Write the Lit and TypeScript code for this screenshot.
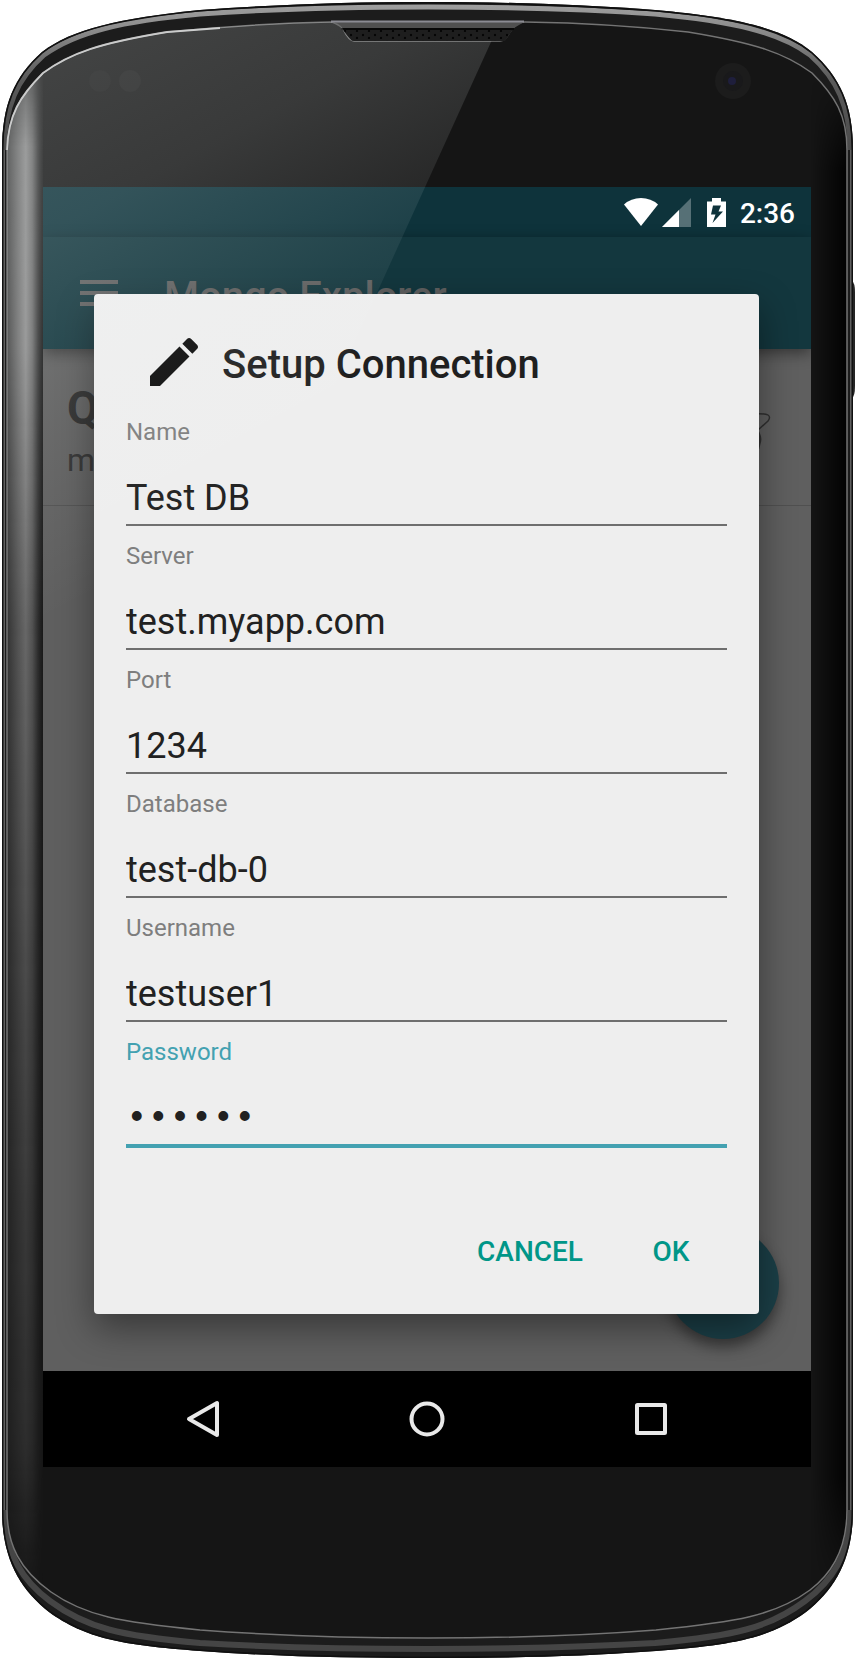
import { LitElement, html, css, svg } from "lit";
import { customElement, state } from "lit/decorators.js";
import { classMap } from "lit/directives/class-map.js";

interface Field {
  id: string;
  label: string;
  value: string;
  type: string;
}

const OUTLINE =
  "M2 150C2 105 14 77 42 52C72 29 120 18 200 10C285 4 350 2 428 2C505 2 570 4 655 10C735 17 783 28 812 52C840 77 853 105 853 150V1510C853 1560 834 1590 806 1612C770 1638 735 1645 656 1651C575 1657 505 1658 428 1658C350 1658 285 1657 200 1651C120 1645 85 1638 49 1612C21 1590 2 1560 2 1510Z";

const GLASS =
  "M7 150C8 115 20 96 43 73C70 53 100 43 167 32C220 27 270 23 330 22Q339 22 343 29Q349 41 354 41H500Q505 41 510 32Q516 22 525 22C590 23 635 26 688 32C755 43 785 53 812 73C835 96 847 115 847 150V1510C847 1545 834 1572 810 1590C775 1616 735 1622 656 1630C580 1636 505 1638 428 1638C350 1638 280 1636 200 1630C120 1622 85 1616 51 1592C20 1570 7 1545 7 1510Z";

@customElement("phone-shell")
export class PhoneShell extends LitElement {
  static styles = css`
    :host {
      display: block;
      position: relative;
      padding: 187px 45px 192px 43px;
    }
    .art {
      position: absolute;
      inset: 0;
      width: 100%;
      height: 100%;
      pointer-events: none;
    }
    .glare {
      z-index: 3;
    }
    .screen {
      position: relative;
    }
  `;

  render() {
    return html`
      <svg class="art" viewBox="0 0 856 1659" preserveAspectRatio="none" aria-hidden="true">
        <defs>
          <linearGradient id="side" x1="7" x2="43" y1="0" y2="0" gradientUnits="userSpaceOnUse">
            <stop offset="0" stop-color="#4a4a4a" />
            <stop offset=".3" stop-color="#808080" />
            <stop offset=".52" stop-color="#a4a4a4" />
            <stop offset=".7" stop-color="#808080" />
            <stop offset=".84" stop-color="#484848" />
            <stop offset="1" stop-color="#303030" stop-opacity=".3" />
          </linearGradient>
          <linearGradient id="sideFade" x1="0" x2="0" y1="70" y2="1600" gradientUnits="userSpaceOnUse">
            <stop offset="0" stop-color="#fff" stop-opacity=".35" />
            <stop offset=".05" stop-color="#fff" stop-opacity=".8" />
            <stop offset=".18" stop-color="#fff" stop-opacity=".85" />
            <stop offset=".34" stop-color="#fff" stop-opacity=".6" />
            <stop offset=".48" stop-color="#fff" stop-opacity=".48" />
            <stop offset=".61" stop-color="#fff" stop-opacity=".36" />
            <stop offset=".74" stop-color="#fff" stop-opacity=".26" />
            <stop offset=".9" stop-color="#fff" stop-opacity=".17" />
            <stop offset="1" stop-color="#fff" stop-opacity="0" />
          </linearGradient>
          <linearGradient id="edge" x1="811" x2="847" y1="0" y2="0" gradientUnits="userSpaceOnUse">
            <stop offset="0" stop-color="#000" stop-opacity="0" />
            <stop offset="1" stop-color="#000" stop-opacity=".85" />
          </linearGradient>
          <linearGradient id="edgeFade" x1="0" x2="0" y1="80" y2="1600" gradientUnits="userSpaceOnUse">
            <stop offset="0" stop-color="#fff" stop-opacity="0" />
            <stop offset=".06" stop-color="#fff" />
            <stop offset=".92" stop-color="#fff" />
            <stop offset="1" stop-color="#fff" stop-opacity="0" />
          </linearGradient>
          <linearGradient id="rimTone" x1="0" x2="0" y1="0" y2="160" gradientUnits="userSpaceOnUse">
            <stop offset="0" stop-color="#a2a2a2" />
            <stop offset=".2" stop-color="#8a8a8a" />
            <stop offset=".5" stop-color="#5a5a5a" />
            <stop offset="1" stop-color="#4a4a4a" />
          </linearGradient>
          <pattern id="mesh" width="12" height="7" patternUnits="userSpaceOnUse" x="348" y="32">
            <rect width="12" height="7" fill="#1e1e1e" />
            <circle cx="3" cy="3" r="1.2" fill="#050505" />
            <circle cx="9" cy="6" r="1.2" fill="#050505" />
          </pattern>
          <mask id="fadeMask"><rect width="60" height="1659" fill="url(#sideFade)" /></mask>
          <mask id="edgeMask"><rect x="800" width="56" height="1659" fill="url(#edgeFade)" /></mask>
          <clipPath id="glassClip"><path d=${GLASS} /></clipPath>
          <clipPath id="bodyClip"><path d=${OUTLINE} /></clipPath>
        </defs>
        <path d="M852 281Q855 283 855 292V386Q855 396 852 398Z" fill="#242424" />
        <path d=${OUTLINE} fill="#1c1c1c" />
        <g clip-path="url(#bodyClip)" fill="none">
          <path d="M4 150C5 107 17 79 44 55C76 32 122 21 200 14C285 8 350 7 428 7C505 7 570 8 655 14C732 21 779 32 810 55C837 79 850 107 850 150" stroke="url(#rimTone)" stroke-width="5" />
          <path d="M4 150V1510M851 150V1510" stroke="#606060" stroke-width="2" />
          <path d="M4 1510C5 1555 24 1582 50 1601C86 1628 121 1636 200 1643C285 1648 350 1649 428 1649C505 1649 570 1648 655 1643C734 1636 769 1628 805 1601C831 1582 850 1555 851 1510" stroke="#454545" stroke-width="6" />
          <path d=${OUTLINE} stroke="#101010" stroke-width="3" />
        </g>
        <path d=${GLASS} fill="#151515" />
        <g clip-path="url(#glassClip)">
          <rect x="7" y="60" width="36" height="1560" fill="url(#side)" mask="url(#fadeMask)" />
          <rect x="811" y="60" width="36" height="1560" fill="url(#edge)" mask="url(#edgeMask)" />
        </g>
        <path d=${GLASS} fill="none" stroke="#747474" stroke-width="1.500" />
        <path d="M7 150C8 115 20 96 43 73C70 53 100 43 167 32L220 28" fill="none" stroke="#c4c4c4" stroke-width="1.800" />
        <path d="M331 22H524L514 28H342Z" fill="#505050" />
        <path d="M331 21.500H524" stroke="#8b8b93" stroke-width="2" />
        <path d="M341 28H514L505 41H352Z" fill="url(#mesh)" />
        <path d="M341 29H514" stroke="#080808" stroke-width="2" />
        <circle cx="100" cy="81" r="11" fill="#191919" />
        <circle cx="130" cy="81" r="11" fill="#1b1b1b" />
        <circle cx="733" cy="81" r="18" fill="#1c1c1c" />
        <circle cx="733" cy="81" r="10" fill="#19191b" />
        <circle cx="732" cy="81" r="4" fill="#1e1e3c" />
      </svg>
      <div class="screen"><slot></slot></div>
      <svg class="art glare" viewBox="0 0 856 1659" preserveAspectRatio="none" aria-hidden="true">
        <defs>
          <linearGradient id="glare" x1="38" y1="72" x2="270" y2="501" gradientUnits="userSpaceOnUse">
            <stop offset="0" stop-color="#f4fafa" stop-opacity=".2" />
            <stop offset=".3" stop-color="#f4fafa" stop-opacity=".16" />
            <stop offset=".65" stop-color="#f4fafa" stop-opacity=".07" />
            <stop offset="1" stop-color="#f4fafa" stop-opacity="0" />
          </linearGradient>
          <clipPath id="glareClip"><path d=${GLASS} /></clipPath>
        </defs>
        <path d="M0 0H510L491 42L190 704H0Z" fill="url(#glare)" clip-path="url(#glareClip)" />
      </svg>
    `;
  }
}

@customElement("app-root")
export class AppRoot extends LitElement {
  static styles = css`
    :host {
      display: block;
      background: #fff;
      font-family: Roboto, "Liberation Sans", sans-serif;
      color: #212121;
    }
    *,
    *::before {
      box-sizing: border-box;
    }
    button {
      border: 0;
      background: none;
      font-family: inherit;
      cursor: pointer;
    }
    svg {
      display: block;
    }
    .stage {
      display: grid;
      grid-template: minmax(0, 1fr) / minmax(0, 1fr);
      overflow: hidden;
    }
    .page,
    .dialog {
      grid-area: 1 / 1;
    }
    .page {
      display: flex;
      flex-direction: column;
      position: relative;
      background: #5f5f5f;
    }
    .status {
      display: flex;
      align-items: center;
      justify-content: flex-end;
      height: 50px;
      padding-right: 16px;
      background: #0e333b;
      color: #fff;
      font-size: 28px;
      line-height: 32px;
      font-weight: 500;
    }
    .clock {
      padding-top: 4px;
    }
    .battery {
      margin: 0 14px 0 16px;
    }
    .signal {
      margin-left: 4px;
    }
    .appbar {
      display: flex;
      align-items: center;
      gap: 46px;
      height: 112px;
      padding: 0 37px;
      background: #13373e;
      box-shadow: 0 4px 14px rgba(0, 0, 0, 0.45);
      color: #606060;
      z-index: 1;
    }
    .menu {
      padding: 0;
      color: inherit;
    }
    .appname {
      margin: 0;
      font-size: 40px;
      line-height: 48px;
      font-weight: 500;
      padding-top: 8px;
    }
    .entry {
      display: flex;
      align-items: center;
      justify-content: space-between;
      height: 157px;
      padding: 12px 32px 0 24px;
      border-bottom: 1px solid #505050;
      color: #2b2b2b;
    }
    .entry-name {
      font-size: 46px;
      line-height: 54px;
      font-weight: 700;
    }
    .entry-host {
      font-size: 32px;
      line-height: 50px;
      color: #303030;
    }
    .fab {
      position: absolute;
      right: 32px;
      bottom: 32px;
      width: 112px;
      height: 112px;
      border-radius: 50%;
      background: #1b3f47;
      box-shadow: 0 8px 14px rgba(0, 0, 0, 0.4);
    }
    .dialog {
      z-index: 2;
      margin: 107px 52px 57px 51px;
      padding: 36px 32px 27px;
      border-radius: 4px;
      background: #eee;
      box-shadow: 0 14px 36px rgba(0, 0, 0, 0.42);
    }
    .heading {
      display: flex;
      align-items: center;
      gap: 16px;
      height: 64px;
      padding-left: 16px;
    }
    .title {
      margin: 0;
      padding-top: 6px;
      font-size: 40px;
      line-height: 48px;
      font-weight: 500;
      color: #1f1f1f;
    }
    .fields {
      display: flex;
      flex-direction: column;
      gap: 15px;
      margin-top: 23px;
    }
    .field {
      display: flex;
      flex-direction: column;
      gap: 28px;
    }
    .label {
      font-size: 24px;
      line-height: 30px;
      color: #7e7e7e;
    }
    .input {
      width: 100%;
      height: 51px;
      margin: 0;
      padding: 2px 0 5px;
      border: 0;
      border-bottom: 2px solid #6e6e6e;
      border-radius: 0;
      outline: 0;
      background: none;
      color: #212121;
      font-family: inherit;
      font-size: 36px;
      line-height: 42px;
    }
    .input.secret {
      font-family: "Liberation Mono", monospace;
    }
    .field.active .label {
      color: #43a1b1;
    }
    .field.active .input {
      height: 53px;
      border-bottom: 4px solid #43a1b1;
    }
    .actions {
      display: flex;
      justify-content: flex-end;
      gap: 8px;
      margin: 67px -8px 0 0;
    }
    .action {
      min-width: 128px;
      height: 72px;
      padding: 2px 16px 0;
      font-size: 28px;
      line-height: 32px;
      font-weight: 500;
      color: #009688;
    }
    .nav {
      display: grid;
      grid-template-columns: repeat(3, 1fr);
      height: 96px;
      padding: 0 48px;
      background: #000;
    }
    .nav-button {
      display: grid;
      place-items: center;
      padding: 0;
    }
  `;

  @state() private active = "password";

  private fields: Field[] = [
    { id: "name", label: "Name", value: "Test DB", type: "text" },
    { id: "server", label: "Server", value: "test.myapp.com", type: "text" },
    { id: "port", label: "Port", value: "1234", type: "text" },
    { id: "database", label: "Database", value: "test-db-0", type: "text" },
    { id: "username", label: "Username", value: "testuser1", type: "text" },
    { id: "password", label: "Password", value: "secret", type: "password" },
  ];

  private navItems = [
    { name: "Back", shape: svg`<path d="M38 8V40L10 24Z" />` },
    { name: "Home", shape: svg`<circle cx="24" cy="24" r="15.500" />` },
    { name: "Recent apps", shape: svg`<rect x="10" y="10" width="28" height="28" rx="0.500" />` },
  ];

  private renderField(f: Field) {
    return html`
      <div class=${classMap({ field: true, active: this.active === f.id })}>
        <label class="label" for=${f.id}>${f.label}</label>
        <input
          class=${classMap({ input: true, secret: f.type === "password" })}
          id=${f.id}
          type=${f.type}
          .value=${f.value}
          spellcheck="false"
          autocomplete="off"
          @focus=${() => (this.active = f.id)}
        />
      </div>
    `;
  }

  render() {
    return html`
      <phone-shell>
        <div class="stage">
          <div class="page">
            <div class="status">
              <svg width="34" height="28" viewBox="0 0 34 28" fill="#fff">
                <path d="M0 6.500Q7 0 17 0T34 6.500L17 28Z" />
              </svg>
              <svg class="signal" width="29" height="29" viewBox="0 0 29 29" fill="#fff">
                <path d="M29 0V29H0Z" opacity=".3" />
                <path d="M17 12V29H0Z" />
              </svg>
              <svg class="battery" width="19" height="29" viewBox="0 0 19 29">
                <path d="M0 3.500H5V0H14V3.500H19V29H0Z" fill="#fff" />
                <path d="M6 7.500H14L11.500 13.500H16L5.500 25L8.500 16.500H4Z" fill="#0e333b" />
              </svg>
              <span class="clock">2:36</span>
            </div>
            <header class="appbar">
              <button class="menu" type="button" aria-label="Menu">
                <svg width="38" height="26" viewBox="0 0 38 26" fill="currentColor">
                  <path d="M0 0H38V4H0ZM0 11H38V15H0ZM0 22H38V26H0Z" />
                </svg>
              </button>
              <h1 class="appname">Mongo Explorer</h1>
            </header>
            <section class="entry">
              <div>
                <div class="entry-name">Q</div>
                <div class="entry-host">m</div>
              </div>
              <svg width="48" height="48" viewBox="0 0 48 48" fill="none" stroke="#303030" stroke-width="1.500">
                <path d="M18 5Q34 4 37 6Q40 8 37 12L27 21" />
                <path d="M26 21Q30 28 29 32L27 40" stroke-width="2.500" />
              </svg>
            </section>
            <button class="fab" type="button" aria-label="Add connection"></button>
          </div>
          <section class="dialog" role="dialog" aria-labelledby="dialog-title">
            <div class="heading">
              <svg width="64" height="64" viewBox="0 0 24 24" fill="#0b0b0b">
                <path
                  d="M3 17.250V21h3.750L17.810 9.940l-3.750-3.750L3 17.250zM20.710 7.040c.390-.390.390-1.020 0-1.410l-2.340-2.340c-.390-.390-1.020-.390-1.410 0l-1.830 1.830 3.750 3.750 1.830-1.830z"
                />
              </svg>
              <h2 class="title" id="dialog-title">Setup Connection</h2>
            </div>
            <form class="fields" @submit=${(e: Event) => e.preventDefault()}>
              ${this.fields.map((f) => this.renderField(f))}
            </form>
            <div class="actions">
              <button class="action" type="button">CANCEL</button>
              <button class="action" type="button">OK</button>
            </div>
          </section>
        </div>
        <nav class="nav">
          ${this.navItems.map(
            (n) => html`
              <button class="nav-button" type="button" aria-label=${n.name}>
                <svg width="48" height="48" viewBox="0 0 48 48" fill="none" stroke="#e9e9e9" stroke-width="4" stroke-linejoin="round">
                  ${n.shape}
                </svg>
              </button>
            `
          )}
        </nav>
      </phone-shell>
    `;
  }
}
